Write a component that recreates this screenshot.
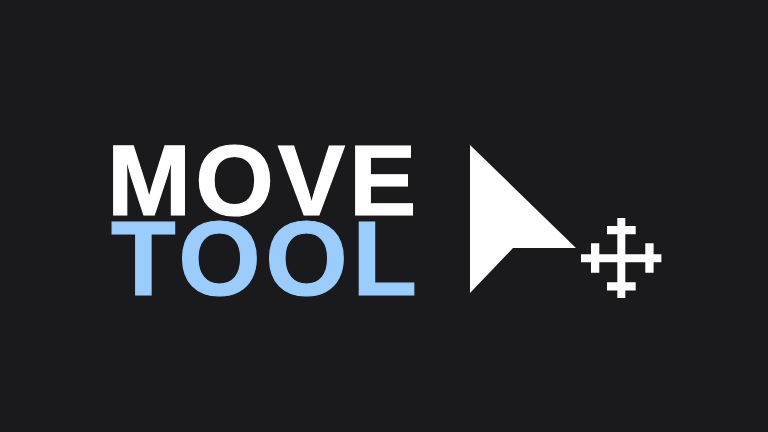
<div class="page">
  <div class="title">
    <div class="move">MOVE</div>
    <div class="tool">TOOL</div>
  </div>
  <svg class="icon" width="192" height="154" viewBox="470 145 192 154" aria-hidden="true">
    <path d="M470 145V293L513 248H576Z" fill="#fff" />
    <path fill="#fff" d="M617.300 218h8v8h10.400v8.300h-10.400v20h20v-11h8.300v11h7.800v8h-7.800v10.500h-8.300v-10.500h-20v20h10.400v8.300h-10.400v7.400h-8v-7.400h-10.300v-8.300h10.300v-20h-18v10.500h-8.300v-10.500h-10v-8h10v-11h8.300v11h18v-20h-10.300v-8.300h10.300z" />
  </svg>
</div>

<style>
  :global(body) {
    margin: 0;
    background: #1a1a1c;
  }
  .page {
    width: 768px;
    height: 432px;
    background: #1a1a1c;
    display: flex;
    align-items: flex-start;
    padding: 143px 0 0 107px;
    box-sizing: border-box;
    font-family: "Liberation Sans", Arial, sans-serif;
    font-weight: 700;
  }
  .title {
    display: flex;
    flex-direction: column;
    width: 363px;
    flex: none;
  }
  .move {
    font-size: 101px;
    line-height: 75px;
    color: #fff;
    letter-spacing: 4px;
    -webkit-text-stroke: 1.200px #fff;
  }
  .tool {
    font-size: 106px;
    line-height: 80px;
    color: #9acdfd;
    letter-spacing: 4.500px;
    margin-left: 4px;
    -webkit-text-stroke: 1.200px #9acdfd;
  }
  .icon {
    display: block;
    margin-top: 2px;
    flex: none;
  }
</style>
